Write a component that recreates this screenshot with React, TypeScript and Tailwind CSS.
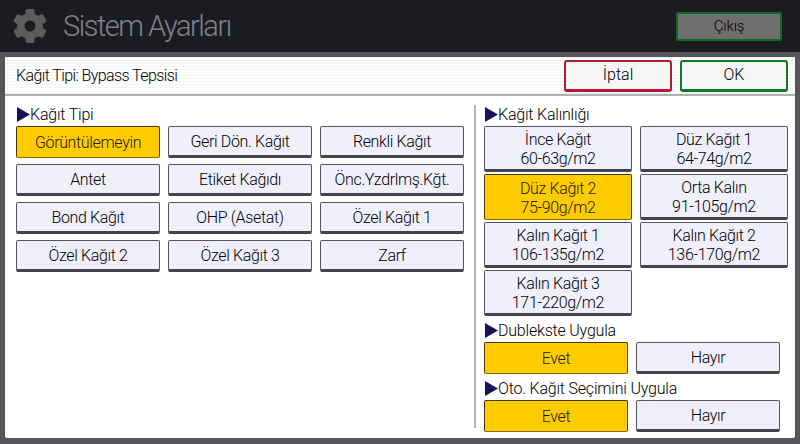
const font = "font-['Roboto','Liberation_Sans',sans-serif]";

function Gear() {
  return (
    <svg width="36" height="38" viewBox="0 0 36 38" className="shrink-0">
      <g fill="#5d5d5d">
        <circle cx="18" cy="19" r="13" />
        <rect x="13.5" y="2" width="9" height="34" rx="2" />
        <rect x="13.5" y="2" width="9" height="34" rx="2" transform="rotate(60 18 19)" />
        <rect x="13.5" y="2" width="9" height="34" rx="2" transform="rotate(120 18 19)" />
      </g>
      <circle cx="18" cy="19" r="5.5" fill="#1b1b22" />
    </svg>
  );
}

function Arrow() {
  return (
    <svg width="14" height="15" viewBox="0 0 14 15" className="shrink-0">
      <polygon points="1,0 14,7.5 1,15" fill="#14145a" />
    </svg>
  );
}

function Label({ text }: { text: string }) {
  return (
    <div className="flex h-[18px] items-center text-[16px] font-light leading-none tracking-[-0.2px] text-black">
      <Arrow />
      <span className="pt-[2px]">{text}</span>
    </div>
  );
}

interface KeyProps {
  lines: string[];
  active?: boolean;
  className: string;
}

function Key({ lines, active, className }: KeyProps) {
  const look = active
    ? "border-[#4a3a00] border-b-[#8a6d00] bg-[#ffcc00] text-[#1f1800]"
    : "border-[#55555f] border-b-[3px] border-b-[#44444c] bg-[#f0f0fc] text-black";
  return (
    <div
      className={`flex flex-col items-center justify-center rounded-[2px] border text-[16px] font-light leading-[19px] tracking-[-0.35px] ${look} ${className}`}
    >
      {lines.map((l) => (
        <span key={l}>{l}</span>
      ))}
    </div>
  );
}

const paperTypes = [
  "Görüntülemeyin",
  "Geri Dön. Kağıt",
  "Renkli Kağıt",
  "Antet",
  "Etiket Kağıdı",
  "Önc.Yzdrlmş.Kğt.",
  "Bond Kağıt",
  "OHP (Asetat)",
  "Özel Kağıt 1",
  "Özel Kağıt 2",
  "Özel Kağıt 3",
  "Zarf",
];

const weights = [
  ["İnce Kağıt", "60-63g/m2"],
  ["Düz Kağıt 1", "64-74g/m2"],
  ["Düz Kağıt 2", "75-90g/m2"],
  ["Orta Kalın", "91-105g/m2"],
  ["Kalın Kağıt 1", "106-135g/m2"],
  ["Kalın Kağıt 2", "136-170g/m2"],
  ["Kalın Kağıt 3", "171-220g/m2"],
];

function YesNo() {
  return (
    <div className="flex gap-2">
      <Key lines={["Evet"]} active className="h-8 w-[144px]" />
      <Key lines={["Hayır"]} className="h-8 w-[144px]" />
    </div>
  );
}

export default function App() {
  return (
    <div className={`flex h-[444px] w-[800px] flex-col overflow-hidden bg-[#55555a] ${font}`}>
      <header className="flex h-[52px] shrink-0 items-center bg-[#1b1b22] pl-[12px] pr-[18px]">
        <Gear />
        <h1 className="ml-[15px] text-[29px] font-light leading-none tracking-[-1.5px] text-[#80808a]">
          Sistem Ayarları
        </h1>
        <div className="ml-auto flex h-[29px] w-[106px] items-center justify-center rounded-[2px] border-2 border-[#0f6a24] bg-[#6f6f6f] text-[15px] font-light tracking-[-0.2px] text-black">
          Çıkış
        </div>
      </header>

      <main className="mx-[5px] mt-[5px] flex h-[381px] flex-col rounded-[2px] bg-white">
        <div className="flex h-[39px] shrink-0 items-center border-b-2 border-[#b0b0b0] bg-[repeating-linear-gradient(0deg,#f4f4f4_0,#f4f4f4_1px,#ffffff_1px,#ffffff_3px)] pl-[11px] pr-[7px]">
          <span className="text-[16px] font-light tracking-[-0.6px] text-black">Kağıt Tipi: Bypass Tepsisi</span>
          <div className="ml-auto flex gap-2">
            <div className="flex h-[32px] w-[108px] items-center justify-center rounded-[3px] border-2 border-b-[3px] border-[#b01c38] bg-[#f6f6f6] text-[16px] font-light text-black">
              İptal
            </div>
            <div className="flex h-[32px] w-[108px] items-center justify-center rounded-[3px] border-2 border-b-[3px] border-[#0f7a22] bg-[#f6f6f6] text-[16px] font-light text-black">
              OK
            </div>
          </div>
        </div>

        <div className="flex flex-1 pt-[9px]">
          <section className="w-[469px] pl-[11px]">
            <Label text="Kağıt Tipi" />
            <div className="mt-[3px] grid w-[448px] grid-cols-3 gap-x-2 gap-y-[6px]">
              {paperTypes.map((t, i) => (
                <Key key={t} lines={[t]} active={i === 0} className="h-8" />
              ))}
            </div>
          </section>

          <div className="h-[323px] w-[2px] bg-[#b4b4b4]" />

          <section className="ml-[8px] flex-1">
            <Label text="Kağıt Kalınlığı" />
            <div className="mt-[3px] grid grid-cols-[148px_148px] gap-x-2 gap-y-[2px]">
              {weights.map((w, i) => (
                <Key key={w[0]} lines={w} active={i === 2} className="h-[46px] pt-[2px]" />
              ))}
            </div>
            <div className="mt-[5px]">
              <Label text="Dublekste Uygula" />
            </div>
            <div className="mt-[3px]">
              <YesNo />
            </div>
            <div className="mt-[5px]">
              <Label text="Oto. Kağıt Seçimini Uygula" />
            </div>
            <div className="mt-[3px]">
              <YesNo />
            </div>
          </section>
        </div>
      </main>
    </div>
  );
}
